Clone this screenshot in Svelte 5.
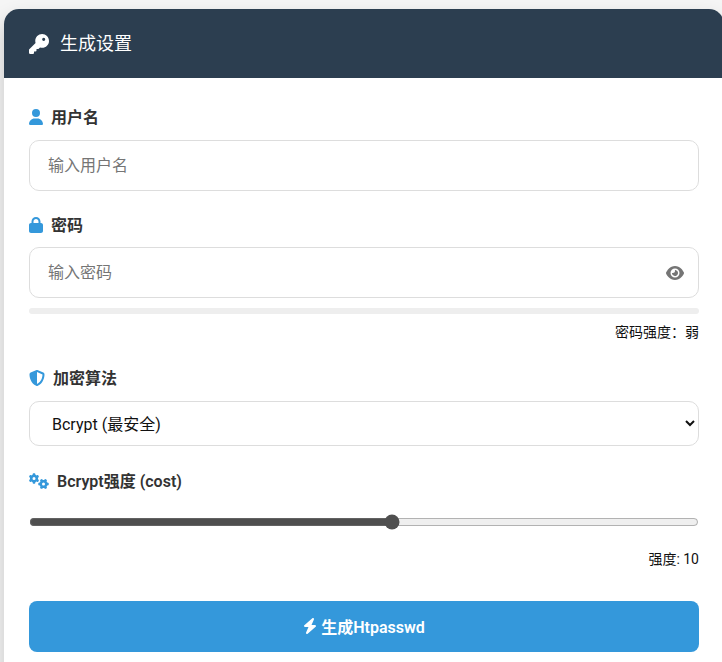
<script lang="ts">
let username = $state("");
let password = $state("");
let showPassword = $state(false);
let algorithm = $state("bcrypt");
let cost = $state(10);
</script>

<main class="card">
  <header class="card__header">
    <svg class="icon icon--key" viewBox="0 0 512 512" aria-hidden="true"><path d="M336 352c97.2 0 176-78.8 176-176S433.2 0 336 0S160 78.8 160 176c0 18.7 2.9 36.8 8.3 53.7L7 391c-4.5 4.5-7 10.6-7 17v80c0 13.3 10.7 24 24 24h80c13.3 0 24-10.7 24-24V448h40c13.3 0 24-10.7 24-24V384h40c6.4 0 12.5-2.5 17-7l33.3-33.3c16.9 5.4 35 8.3 53.7 8.3zM376 96a40 40 0 1 1 0 80 40 40 0 1 1 0-80z"/></svg>
    <h2>生成设置</h2>
  </header>

  <form class="card__body" onsubmit={(e) => e.preventDefault()}>
    <div class="field">
      <label for="username">
        <svg class="icon" viewBox="0 0 448 512" aria-hidden="true"><path d="M224 256A128 128 0 1 0 224 0a128 128 0 1 0 0 256zm-45.7 48C79.8 304 0 383.8 0 482.3C0 498.7 13.3 512 29.7 512H418.3c16.4 0 29.7-13.3 29.7-29.7C448 383.8 368.2 304 269.7 304H178.3z"/></svg>
        用户名
      </label>
      <input id="username" type="text" placeholder="输入用户名" bind:value={username} />
    </div>

    <div class="field">
      <label for="password">
        <svg class="icon" viewBox="0 0 448 512" aria-hidden="true"><path d="M144 144v48H304V144c0-44.2-35.8-80-80-80s-80 35.8-80 80zM80 192V144C80 64.5 144.5 0 224 0s144 64.5 144 144v48h16c35.3 0 64 28.7 64 64V448c0 35.3-28.7 64-64 64H64c-35.3 0-64-28.7-64-64V256c0-35.3 28.7-64 64-64H80z"/></svg>
        密码
      </label>
      <div class="password">
        <input id="password" type={showPassword ? "text" : "password"} placeholder="输入密码" bind:value={password} />
        <button type="button" class="password__toggle" aria-label="显示密码" onclick={() => (showPassword = !showPassword)}>
          <svg viewBox="0 0 576 512" aria-hidden="true"><path d="M288 32c-80.8 0-145.5 36.8-192.6 80.6C48.6 156 17.3 208 2.5 243.7c-3.3 7.9-3.3 16.7 0 24.6C17.3 304 48.6 356 95.4 399.4C142.5 443.2 207.2 480 288 480s145.5-36.8 192.6-80.6c46.8-43.5 78.1-95.4 93-131.1c3.3-7.9 3.3-16.7 0-24.6c-14.9-35.7-46.2-87.7-93-131.1C433.5 68.8 368.8 32 288 32zM144 256a144 144 0 1 1 288 0 144 144 0 1 1 -288 0zm144-64c0 35.3-28.7 64-64 64c-7.1 0-13.9-1.2-20.3-3.3c-5.5-1.8-11.9 1.6-11.7 7.4c.3 6.9 1.3 13.8 3.2 20.7c13.7 51.2 66.4 81.6 117.6 67.9s81.6-66.4 67.9-117.6c-11.1-41.5-47.8-69.4-88.6-71.1c-5.8-.2-9.2 6.1-7.4 11.7c2.1 6.4 3.3 13.2 3.3 20.3z"/></svg>
        </button>
      </div>
      <div class="meter"></div>
      <div class="hint">密码强度：弱</div>
    </div>

    <div class="field field--select">
      <label for="algorithm">
        <svg class="icon" viewBox="0 0 512 512" aria-hidden="true"><path d="M256 0c4.6 0 9.2 1 13.4 2.9L457.7 82.8c22 9.3 38.4 31 38.3 57.2c-.5 99.2-41.3 280.7-213.6 363.2c-16.7 8-36.1 8-52.8 0C57.3 420.7 16.5 239.2 16 140c-.1-26.2 16.3-47.9 38.3-57.2L242.7 2.9C246.8 1 251.4 0 256 0zm0 66.8V444.8C394 378 431.1 230.1 432 141.4L256 66.8l0 0z"/></svg>
        加密算法
      </label>
      <select id="algorithm" bind:value={algorithm}>
        <option value="bcrypt">Bcrypt (最安全)</option>
        <option value="md5">MD5</option>
        <option value="sha1">SHA1</option>
      </select>
    </div>

    <div class="field">
      <label for="cost">
        <svg class="icon" viewBox="0 0 640 512" aria-hidden="true"><path d="M308.5 135.3c7.1-6.3 9.9-16.2 6.2-25c-2.3-5.3-4.8-10.5-7.6-15.5L304 89.4c-3-5-6.3-9.9-9.8-14.6c-5.7-7.6-15.7-10.1-24.7-7.1l-28.2 9.3c-10.7-8.8-23-16-36.2-20.9L199 27.1c-1.9-9.3-9.1-16.7-18.5-17.8C173.9 8.4 167.2 8 160.4 8h-.7c-6.8 0-13.5 .4-20.1 1.2c-9.4 1.1-16.6 8.6-18.5 17.8L115 56.1c-13.3 5-25.5 12.1-36.2 20.9L50.5 67.8c-9-3-19-.5-24.7 7.1c-3.5 4.7-6.8 9.6-9.9 14.6l-3 5.3c-2.8 5-5.3 10.2-7.6 15.6c-3.7 8.7-.9 18.6 6.2 25l22.2 19.8C32.6 161.9 32 168.9 32 176s.6 14.1 1.7 20.9L11.5 216.7c-7.1 6.3-9.9 16.2-6.2 25c2.3 5.3 4.8 10.5 7.6 15.6l3 5.2c3 5.1 6.3 9.9 9.9 14.6c5.7 7.6 15.7 10.1 24.7 7.1l28.2-9.3c10.7 8.8 23 16 36.2 20.9l6.1 29.1c1.9 9.3 9.1 16.7 18.5 17.8c6.7 .8 13.5 1.2 20.4 1.2s13.7-.4 20.4-1.2c9.4-1.1 16.6-8.6 18.5-17.8l6.1-29.1c13.3-5 25.5-12.1 36.2-20.9l28.2 9.3c9 3 19 .5 24.7-7.1c3.5-4.7 6.8-9.5 9.8-14.6l3.1-5.4c2.8-5 5.3-10.2 7.6-15.5c3.7-8.7 .9-18.6-6.2-25l-22.2-19.8c1.1-6.8 1.7-13.8 1.7-20.9s-.6-14.1-1.7-20.9l22.2-19.8zM112 176a48 48 0 1 1 96 0 48 48 0 1 1 -96 0zM504.7 500.5c6.3 7.1 16.2 9.9 25 6.2c5.3-2.3 10.5-4.8 15.5-7.6l5.4-3.1c5-3 9.9-6.3 14.6-9.8c7.6-5.7 10.1-15.7 7.1-24.7l-9.3-28.2c8.8-10.7 16-23 20.9-36.2l29.1-6.1c9.3-1.9 16.7-9.1 17.8-18.5c.8-6.7 1.2-13.5 1.2-20.4s-.4-13.7-1.2-20.4c-1.1-9.4-8.6-16.6-17.8-18.5L583.9 307c-5-13.3-12.1-25.5-20.9-36.2l9.3-28.2c3-9 .5-19-7.1-24.7c-4.7-3.5-9.6-6.8-14.6-9.9l-5.3-3c-5-2.8-10.2-5.3-15.6-7.6c-8.7-3.7-18.6-.9-25 6.2l-19.8 22.2c-6.8-1.1-13.8-1.7-20.9-1.7s-14.1 .6-20.9 1.7l-19.8-22.2c-6.3-7.1-16.2-9.9-25-6.2c-5.3 2.3-10.5 4.8-15.6 7.6l-5.2 3c-5.1 3-9.9 6.3-14.6 9.9c-7.6 5.7-10.1 15.7-7.1 24.7l9.3 28.2c-8.8 10.7-16 23-20.9 36.2L315.1 313c-9.3 1.9-16.7 9.1-17.8 18.5c-.8 6.7-1.2 13.5-1.2 20.4s.4 13.7 1.2 20.4c1.1 9.4 8.6 16.6 17.8 18.5l29.1 6.1c5 13.3 12.1 25.5 20.9 36.2l-9.3 28.2c-3 9-.5 19 7.1 24.7c4.7 3.5 9.5 6.8 14.6 9.8l5.4 3.1c5 2.8 10.2 5.3 15.5 7.6c8.7 3.7 18.6 .9 25-6.2l19.8-22.2c6.8 1.1 13.8 1.7 20.9 1.7s14.1-.6 20.9-1.7l19.8 22.2zM464 304a48 48 0 1 1 0 96 48 48 0 1 1 0-96z"/></svg>
        Bcrypt强度 (cost)
      </label>
      <input id="cost" class="range" type="range" min="4" max="15.05" bind:value={cost} />
      <div class="hint hint--cost">强度: {cost}</div>
    </div>

    <button type="submit" class="submit">
      <svg viewBox="0 0 448 512" aria-hidden="true"><path d="M349.4 44.6c5.9-13.7 1.5-29.7-10.6-38.5s-28.6-8-39.9 1.8l-256 224c-10 8.8-13.6 22.9-8.9 35.3S50.7 288 64 288H175.5L98.6 467.4c-5.9 13.7-1.5 29.7 10.6 38.5s28.6 8 39.9-1.8l256-224c10-8.8 13.6-22.9 8.9-35.3s-16.6-20.7-30-20.7H272.5L349.4 44.6z"/></svg>
      生成Htpasswd
    </button>
  </form>
</main>

<style>
  :global(html) {
    overflow: hidden;
  }

  :global(body) {
    background: #f5f5f5;
    font-family: Roboto, "Noto Sans CJK SC", sans-serif;
    color: #333;
  }

  .card {
    width: 720px;
    margin: 9px 0 0 4px;
    background: #fff;
    border-radius: 15px;
    box-shadow: 0 10px 20px rgba(0, 0, 0, 0.2);
    overflow: hidden;
  }

  .card__header {
    display: flex;
    align-items: center;
    gap: 11px;
    height: 69px;
    padding: 0 25px;
    box-sizing: border-box;
    background: #2c3e50;
    color: #fff;
  }

  .card__header h2 {
    margin: 0 0 4px;
    font-size: 18px;
    font-weight: 400;
  }

  .icon {
    width: auto;
    height: 16px;
    margin-top: 2px;
    fill: #3498db;
    flex: none;
  }

  .icon--key {
    height: 20px;
    margin-top: 0;
    fill: #fff;
  }

  .card__body {
    display: flex;
    flex-direction: column;
    padding: 25px;
  }

  .field {
    display: flex;
    flex-direction: column;
    margin-bottom: 20px;
  }

  .field--select {
    margin-bottom: 21.5px;
  }

  label {
    display: flex;
    align-items: center;
    gap: 8px;
    height: 26px;
    margin-bottom: 10.5px;
    font-size: 16px;
    font-weight: 600;
    color: #333;
  }

  input[type="text"],
  input[type="password"] {
    width: 100%;
    height: 51px;
    box-sizing: border-box;
    padding: 0 18px;
    border: 1px solid #ddd;
    border-radius: 10px;
    font: inherit;
    font-size: 16px;
    outline: none;
  }

  input::placeholder {
    color: #757575;
  }

  .password {
    position: relative;
  }

  .password__toggle {
    position: absolute;
    top: 18px;
    right: 15px;
    width: 18px;
    height: 16px;
    padding: 0;
    border: 0;
    background: none;
  }

  .password__toggle svg {
    display: block;
    width: 18px;
    height: 16px;
    fill: #757575;
  }

  .meter {
    height: 6px;
    margin-top: 10px;
    border-radius: 3px;
    background: #eee;
  }

  .hint {
    margin: 8px 0 2px;
    font-size: 14px;
    line-height: 20px;
    text-align: right;
    color: #111;
  }

  .hint--cost {
    margin: 19px 0 12px;
  }

  select {
    width: 100%;
    height: 45px;
    box-sizing: border-box;
    padding: 2px 18px 0;
    border: 1px solid #ddd;
    border-radius: 10px;
    background: #fff;
    font: inherit;
    font-size: 16px;
    color: #111;
  }

  .range {
    width: 100%;
    margin: 10.5px 0 0;
    accent-color: #4f4f4f;
  }

  .submit {
    display: flex;
    align-items: center;
    justify-content: center;
    gap: 4px;
    height: 51px;
    padding: 0 0 2px;
    border: 0;
    border-radius: 8px;
    background: #3498db;
    color: #fff;
    font: inherit;
    font-size: 16px;
    font-weight: 600;
  }

  .submit svg {
    height: 16px;
    fill: #fff;
  }
</style>
